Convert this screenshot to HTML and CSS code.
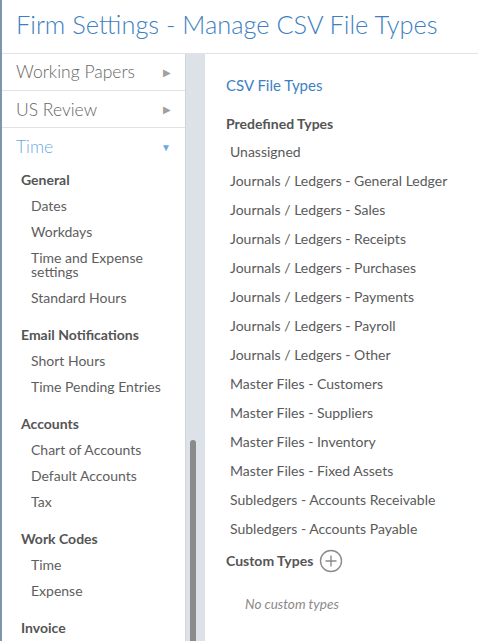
FILE: index.html
```html
<!DOCTYPE html>
<html>
<head>
<meta charset="utf-8">
<link rel="stylesheet" href="styles.css">
</head>
<body>
<div class="app">
  <header class="page-header">
    <h1 class="page-title">Firm Settings - Manage CSV File Types</h1>
  </header>
  <div class="layout">
    <nav class="sidebar">
      <div class="nav-top">
        <span>Working Papers</span><span class="arrow">&#9654;</span>
      </div>
      <div class="nav-top">
        <span>US Review</span><span class="arrow">&#9654;</span>
      </div>
      <div class="nav-top active">
        <span>Time</span><span class="arrow down">&#9660;</span>
      </div>
      <div class="nav-groups">
        <div class="nav-group">
          <div class="group-title">General</div>
          <div class="group-item">Dates</div>
          <div class="group-item">Workdays</div>
          <div class="group-item">Time and Expense settings</div>
          <div class="group-item">Standard Hours</div>
        </div>
        <div class="nav-group">
          <div class="group-title">Email Notifications</div>
          <div class="group-item">Short Hours</div>
          <div class="group-item">Time Pending Entries</div>
        </div>
        <div class="nav-group">
          <div class="group-title">Accounts</div>
          <div class="group-item">Chart of Accounts</div>
          <div class="group-item">Default Accounts</div>
          <div class="group-item">Tax</div>
        </div>
        <div class="nav-group">
          <div class="group-title">Work Codes</div>
          <div class="group-item">Time</div>
          <div class="group-item">Expense</div>
        </div>
        <div class="nav-group">
          <div class="group-title">Invoice</div>
        </div>
      </div>
    </nav>
    <div class="scroll-track"><div class="scroll-thumb"></div></div>
    <main class="content">
      <h2 class="content-title">CSV File Types</h2>
      <h3 class="section-title">Predefined Types</h3>
      <ul class="type-list">
        <li>Unassigned</li>
        <li>Journals / Ledgers - General Ledger</li>
        <li>Journals / Ledgers - Sales</li>
        <li>Journals / Ledgers - Receipts</li>
        <li>Journals / Ledgers - Purchases</li>
        <li>Journals / Ledgers - Payments</li>
        <li>Journals / Ledgers - Payroll</li>
        <li>Journals / Ledgers - Other</li>
        <li>Master Files - Customers</li>
        <li>Master Files - Suppliers</li>
        <li>Master Files - Inventory</li>
        <li>Master Files - Fixed Assets</li>
        <li>Subledgers - Accounts Receivable</li>
        <li>Subledgers - Accounts Payable</li>
      </ul>
      <div class="custom-head">
        <h3 class="section-title inline">Custom Types</h3>
        <button class="add-btn" aria-label="Add custom type">
          <svg width="24" height="24" viewBox="0 0 24 24"><circle cx="12" cy="12" r="10.5" fill="none" stroke="#8c8c8c" stroke-width="1.4"/><path d="M12 6.5v11M6.5 12h11" stroke="#8c8c8c" stroke-width="1.4" fill="none"/></svg>
        </button>
      </div>
      <p class="empty">No custom types</p>
    </main>
  </div>
</div>
</body>
</html>
```

FILE: styles.css
```css
* { box-sizing: border-box; }
html, body { margin: 0; padding: 0; }
body {
  width: 478px;
  height: 641px;
  overflow: hidden;
  background: #fff;
  font-family: Lato, "Open Sans", sans-serif;
}
.app {
  border-left: 2px solid #7f95ad;
  height: 641px;
  display: flex;
  flex-direction: column;
}
.page-header {
  height: 54px;
  border-bottom: 1px solid #e0e3e6;
  padding-left: 14px;
  flex: none;
}
.page-title {
  margin: 0;
  font-weight: 300;
  font-size: 25.4px;
  line-height: 48px;
  color: #3d7fc1;
}
.layout {
  flex: 1;
  display: flex;
  min-height: 0;
}
.sidebar {
  width: 183px;
  flex: none;
  overflow: hidden;
}
.nav-top {
  height: 37px;
  border-bottom: 1px solid #e0e3e6;
  display: flex;
  align-items: center;
  justify-content: space-between;
  padding: 0 14px 0 14px;
  font-size: 17.5px;
  font-weight: 300;
  color: #666;
}
.nav-top:first-child span:first-child { position: relative; top: -1px; }
.nav-top.active {
  border-bottom: none;
  color: #6aa9e3;
}
.arrow {
  font-size: 10px;
  color: #a0a0a0;
}
.arrow.down { color: #6aa9e3; }
.nav-groups {
  padding-top: 2px;
}
.nav-group {
  padding: 0 0 0 19px;
  margin-bottom: 11px;
}
.group-title {
  font-size: 14px;
  font-weight: 700;
  color: #555;
  line-height: 26px;
}
.group-item {
  font-size: 14px;
  color: #5e5e5e;
  padding-left: 10px;
  padding-right: 12px;
  line-height: 14px;
  padding-top: 6px;
  padding-bottom: 6px;
}
.scroll-track {
  width: 20px;
  flex: none;
  background: #dde2e8;
  border-left: 1px solid #cfd5dc;
  display: flex;
  flex-direction: column;
  padding-top: 386px;
  padding-left: 4px;
}
.scroll-thumb {
  width: 6px;
  flex: 1;
  background: #8b8b8b;
  border-radius: 3px 3px 0 0;
}
.content {
  flex: 1;
  padding: 21px 0 0 21px;
}
.content-title {
  margin: 0;
  font-size: 15px;
  font-weight: 400;
  color: #3d7fc1;
  line-height: 20px;
}
.section-title {
  margin: 19px 0 0 0;
  font-size: 14px;
  font-weight: 700;
  color: #555;
  line-height: 20px;
}
.type-list {
  list-style: none;
  margin: 3px 0 0 0;
  padding: 0 0 0 4px;
}
.type-list li {
  font-size: 14px;
  color: #5a5a5a;
  line-height: 29px;
}
.custom-head {
  display: flex;
  align-items: center;
  gap: 6px;
  margin-top: 6px;
}
.section-title.inline { margin: 0; }
.add-btn {
  border: none;
  background: none;
  padding: 0;
  width: 24px;
  height: 24px;
  display: flex;
}
.empty {
  margin: 23px 0 0 19px;
  font-size: 13.5px;
  font-style: italic;
  color: #8a8a8a;
}
```
